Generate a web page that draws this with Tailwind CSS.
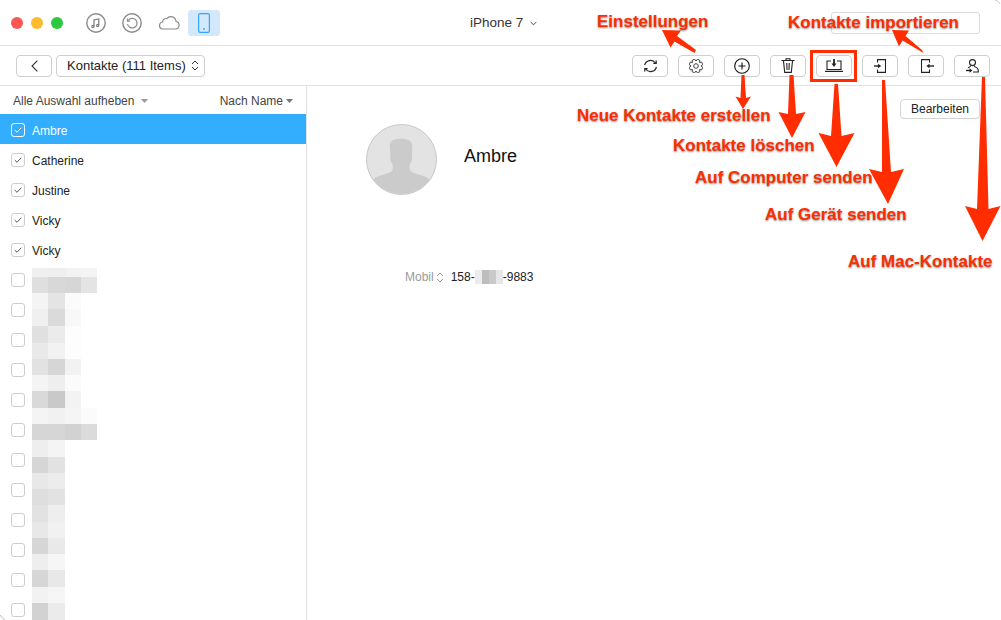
<!DOCTYPE html>
<html lang="en">
<head>
  <meta charset="UTF-8">
  <title>AnyTrans - Kontakte</title>
  <script src="https://cdn.jsdelivr.net/npm/@tailwindcss/browser@4"></script>
</head>
<body class="bg-white w-[1001px] h-[620px] overflow-hidden relative font-['Liberation_Sans',sans-serif] text-[12px] text-[#222]">

  <!-- title bar -->
  <header class="h-[46px] border-b border-[#e2e2e2] flex items-center relative">
    <div class="flex gap-2 ml-[11px]">
      <span class="w-3 h-3 rounded-full bg-[#fc5753]"></span>
      <span class="w-3 h-3 rounded-full bg-[#fdbb2e]"></span>
      <span class="w-3 h-3 rounded-full bg-[#2bc840]"></span>
    </div>
    <div class="flex items-center ml-[23px] text-[#8c8c8c]">
      <svg class="w-5 h-5" viewBox="0 0 20 20" fill="none" stroke="currentColor">
        <circle cx="10" cy="10" r="9.2" stroke-width="1.4"/>
        <path d="M8 13.500V7l4.800-1v6.200" stroke-width="1.200" stroke="#777"/>
        <circle cx="6.900" cy="13.500" r="1.100" stroke-width="1.100" stroke="#777"/><circle cx="11.700" cy="12.500" r="1.100" stroke-width="1.100" stroke="#777"/>
      </svg>
      <svg class="w-5 h-5 ml-4" viewBox="0 0 20 20" fill="none" stroke="currentColor">
        <circle cx="10" cy="10" r="9.2" stroke-width="1.400"/>
        <path d="M6.200 7.500A4.800 4.800 0 1 1 5.500 11" stroke-width="1.200"/>
        <path d="M5.500 5.500v2.600h2.600" stroke-width="1.200"/>
      </svg>
      <svg class="w-[23px] h-[15px] ml-[15px]" viewBox="0 0 23 15" fill="none" stroke="currentColor" stroke-width="1.200">
        <path d="M5 14h13.500a3.800 3.800 0 0 0 .6-7.500A5.200 5.200 0 0 0 9.800 3.600 3.400 3.400 0 0 0 5.600 7 3.600 3.600 0 0 0 5 14z"/>
      </svg>
    </div>
    <div class="w-8 h-[26px] ml-2 rounded-[3px] bg-[#d3e8fb] flex items-center justify-center">
      <svg class="w-3 h-5" viewBox="0 0 12 20" fill="none" stroke="#35a6f5" stroke-width="1.200">
        <rect x=".6" y=".6" width="10.800" height="18.800" rx="1.600"/>
        <circle cx="6" cy="16" r=".9" fill="#35a6f5" stroke="none"/>
      </svg>
    </div>
    <div class="absolute left-[470px] top-[13px] flex items-center gap-[7px] text-[13.500px] text-[#333]">
      iPhone 7
      <svg class="w-[7px] h-[5px]" viewBox="0 0 7 5" fill="none" stroke="#444" stroke-width="1"><path d="M.7 1l2.800 2.800L6.300 1"/></svg>
    </div>
    <div class="absolute left-[831px] top-[12px] w-[149px] h-[22px] border border-[#dcdcdc] rounded-[3px]"></div>
  </header>

  <!-- toolbar -->
  <div class="h-[40px] border-b border-[#e2e2e2] flex items-center pl-4 pr-[11px]">
    <button class="w-9 h-[22px] border border-[#cfcfcf] rounded-[4px] flex items-center justify-center">
      <svg class="w-[7px] h-3" viewBox="0 0 7 12" fill="none" stroke="#333" stroke-width="1.100"><path d="M6.400 .6L1 6l5.400 5.400"/></svg>
    </button>
    <button class="w-[149px] h-[22px] ml-1 border border-[#cfcfcf] rounded-[4px] flex items-center pl-[10px] gap-[5px] text-[13px] text-[#222]">
      Kontakte (111 Items)
      <svg class="w-2 h-[11px]" viewBox="0 0 8 11" fill="none" stroke="#333" stroke-width="1"><path d="M1 4l3-3 3 3M1 7l3 3 3-3"/></svg>
    </button>
    <div class="ml-auto flex gap-[10px]">
      <button class="w-9 h-[22px] border border-[#cfcfcf] rounded-[4px] flex items-center justify-center">
        <svg class="w-[15px] h-[14px]" viewBox="0 0 15 14" fill="none" stroke="#222" stroke-width="1.200">
          <path d="M1.600 6.200A6 6 0 0 1 12.400 4"/><path d="M13.400 7.800A6 6 0 0 1 2.600 10"/>
          <path d="M13.200 1.600V4.400H10.400"/><path d="M1.800 12.400V9.600H4.600"/>
        </svg>
      </button>
      <button class="w-9 h-[22px] border border-[#cfcfcf] rounded-[4px] flex items-center justify-center">
        <svg class="w-[14px] h-[14px]" viewBox="0 0 14 14" fill="none" stroke="#444" stroke-width="1">
          <path id="gear"/>
          <circle cx="7" cy="7" r="2.300"/>
        </svg>
      </button>
      <button class="w-9 h-[22px] border border-[#cfcfcf] rounded-[4px] flex items-center justify-center">
        <svg class="w-4 h-4" viewBox="0 0 16 16" fill="none" stroke="#111" stroke-width="1.100">
          <circle cx="8" cy="8" r="7.300"/><path d="M8 4.500v7M4.500 8h7"/>
        </svg>
      </button>
      <button class="w-9 h-[22px] border border-[#cfcfcf] rounded-[4px] flex items-center justify-center">
        <svg class="w-[14px] h-[15px]" viewBox="0 0 14 15" fill="none" stroke="#222" stroke-width="1.100">
          <path d="M.5 2.500h13M2.500 3l1.200 11.400h6.600L11.500 3M5 2.300V.7h4v1.600M5.800 5l.2 7M8.200 5l-.2 7"/>
        </svg>
      </button>
      <button class="w-9 h-[22px] border border-[#cfcfcf] rounded-[4px] flex items-center justify-center">
        <svg class="w-[18px] h-[13px]" viewBox="0 0 18 13" fill="none" stroke="#222" stroke-width="1.100">
          <path d="M6 2H2v8.500h14V2h-4"/><path d="M0 12.400h18" stroke-width="1.300"/><path d="M9 0v5" stroke-width="1.800"/><path d="M6.500 4.500h5L9 8z" fill="#222" stroke="none"/>
        </svg>
      </button>
      <button class="w-9 h-[22px] border border-[#cfcfcf] rounded-[4px] flex items-center justify-center">
        <svg class="w-[12px] h-[14px]" viewBox="0 0 12 14" fill="none" stroke="#222" stroke-width="1.100">
          <path d="M3.500 3.500V.6h8v12.800h-8v-2.900"/><path d="M0 7h4.500" stroke-width="1.400"/><path d="M4 4.700L7.200 7 4 9.300z" fill="#222" stroke="none"/>
        </svg>
      </button>
      <button class="w-9 h-[22px] border border-[#cfcfcf] rounded-[4px] flex items-center justify-center">
        <svg class="w-[13px] h-[14px] ml-[3px]" viewBox="0 0 13 14" fill="none" stroke="#222" stroke-width="1.100">
          <path d="M8.500 3.500V.6h-8v12.800h8v-2.900"/><path d="M8 7h5" stroke-width="1.400"/><path d="M8.500 4.700L5.300 7l3.200 2.300z" fill="#222" stroke="none"/>
        </svg>
      </button>
      <button class="w-9 h-[22px] border border-[#cfcfcf] rounded-[4px] flex items-center justify-center">
        <svg class="w-[13px] h-[14px]" viewBox="0 0 13 14" fill="none" stroke="#222" stroke-width="1.100">
          <circle cx="6.500" cy="3.600" r="3"/><path d="M4.800 6.500c0 1.200-1.300 1.600-2.800 2.300M8.200 6.500c0 1.300 1.800 1.700 3 2.600.8.600 1.200 2 1.200 3.900H7"/>
          <path d="M0 11.500h4" stroke-width="1.400"/><path d="M3.500 9.300L6.500 11.500 3.500 13.700z" fill="#222" stroke="none"/>
        </svg>
      </button>
    </div>
  </div>

  <main class="flex h-[534px]">
    <!-- contact list -->
    <aside class="w-[307px] border-r border-[#e2e2e2] overflow-hidden shrink-0">
      <div class="h-7 flex items-center justify-between pt-[2px] px-[13px] text-[#444]">
        <span class="flex items-center gap-[7px]">Alle Auswahl aufheben
          <svg class="w-[7px] h-1" viewBox="0 0 7 4" fill="#999"><path d="M0 0h7L3.500 4z"/></svg></span>
        <span class="flex items-center gap-[3px]">Nach Name
          <svg class="w-[7px] h-1" viewBox="0 0 7 4" fill="#777"><path d="M0 0h7L3.500 4z"/></svg></span>
      </div>
      <ul id="contacts"></ul>
    </aside>

    <!-- details -->
    <section class="flex-1 relative">
      <button class="absolute left-[593px] top-[13px] w-[80px] h-[20px] border border-[#d4d4d4] rounded-[4px] text-[12px] text-[#222]">Bearbeiten</button>
      <div class="flex items-center pl-[59px] pt-[38px]">
        <div class="w-[71px] h-[71px] rounded-full bg-[#e3e3e3] border border-[#c8c8c8] overflow-hidden">
          <svg class="w-full h-full" viewBox="0 0 70 70" fill="#cbcbcb">
            <path d="M23 22c0-6 4-8 11.500-8S46 16 46 22l-.5 10c1 .5.500 3-.5 5-.5 1-1 1.500-1.500 3-.5 2-.5 5 1 7 3 3 12 3 19 8 3 3 3 10 3 15H3c0-5 0-12 3-15 7-5 16-5 19-8 1.500-2 1.500-5 1-7-.5-1.500-1-2-1.500-3-1-2-1.500-4.500-.5-5z"/>
          </svg>
        </div>
        <span class="ml-[27px] text-[18px] text-[#111] -mt-[7px]">Ambre</span>
      </div>
      <div class="flex items-center mt-[73px] pl-[98px] text-[12px]">
        <span class="text-[#9a9a9a]">Mobil</span>
        <svg class="w-2 h-[11px] ml-[2px]" viewBox="0 0 8 11" fill="none" stroke="#999" stroke-width="1"><path d="M1 4l3-3 3 3M1 7l3 3 3-3"/></svg>
        <span class="ml-[7px]">158-</span>
        <span class="flex w-[28px] h-[14px]">
          <i class="flex-1 bg-[#ececec]"></i><i class="flex-1 bg-[#bdbdbd]"></i><i class="flex-1 bg-[#c9c9c9]"></i><i class="flex-1 bg-[#e6e6e6]"></i>
        </span>
        <span>-9883</span>
      </div>
    </section>
  </main>

  <!-- blurred names, lies over the list rows -->
  <div id="mosaic" class="absolute left-[32px] top-[268px] w-[65px] flex flex-col"></div>

  <!-- red annotations over the screenshot -->
  <svg class="absolute inset-0 w-[1001px] h-[620px] pointer-events-none" viewBox="0 0 1001 620" fill="#ff2d00">
    <rect x="811.500" y="51.500" width="44" height="29" fill="none" stroke="#ff2d00" stroke-width="3"/>
    <path d="M696 50l-1.500 3-20-11.500-4 6L662 30l19 .5-4 5.500z"/>
    <path d="M922 50l1.500 3-21-12.500-3.500 6L892 30l17 .5-3.500 5.500z"/>
    <path d="M741.500 75h3l1.500 23 5-1.500L743 109l-7.500-12.500 5 1.500z"/>
    <path d="M789.500 75h4l2.500 39 9.500-2L792 138l-13.500-26 9.500 2z"/>
    <path d="M834.500 84h3.500l3.500 52 13-3-18 34-18-34 12.500 3z"/>
    <path d="M882 80h3l6 92 13-3-16 35-19-35 13 3z"/>
    <path d="M982 77h3l3.500 132 12-3-18 35-17.500-35 12 3z"/>
    <!-- window corners -->
    <path d="M995 0q4 1 5 4" fill="none" stroke="#ccc"/>
    <path d="M0 615q2 3 5 5" fill="none" stroke="#bbb"/>
  </svg>
  <span class="note left-[597px] top-[12px]">Einstellungen</span>
  <span class="note left-[788px] top-[13px]">Kontakte importieren</span>
  <span class="note left-[577px] top-[106px]">Neue Kontakte erstellen</span>
  <span class="note left-[673px] top-[136px]">Kontakte löschen</span>
  <span class="note left-[695px] top-[168px]">Auf Computer senden</span>
  <span class="note left-[765px] top-[205px]">Auf Gerät senden</span>
  <span class="note left-[848px] top-[252px]">Auf Mac-Kontakte</span>

  <script>
    // list rows
    const names = ['Ambre', 'Catherine', 'Justine', 'Vicky', 'Vicky'];
    const list = document.getElementById('contacts');
    for (let i = 0; i < 17; i++) {
      const active = i === 0;
      const name = names[i] || '';
      const li = document.createElement('li');
      li.className = active
        ? 'h-[30px] flex items-center pt-[2px] pl-[11px] gap-[7px] bg-[#33aeff] text-white'
        : 'h-[30px] flex items-center pt-[2px] pl-[11px] gap-[7px] text-[#222]';
      const box = active ? 'border-white' : 'border-[#cdcdcd]';
      const tick = name
        ? '<svg class="w-2 h-[6px]" viewBox="0 0 8 6" fill="none" stroke="' + (active ? '#fff' : '#555') + '"><path d="M.7 3l2.300 2.300L7.300 .7"/></svg>'
        : '';
      li.innerHTML = '<span class="w-[14px] h-[14px] rounded-[3px] border ' + box + ' flex items-center justify-center">' + tick + '</span><span class="mt-[2px]">' + name + '</span>';
      list.appendChild(li);
    }

    // gear outline, 8 teeth
    let d = '';
    for (let k = 0; k < 8; k++) {
      const a = k * Math.PI / 4 + Math.PI / 8;
      [[5, -0.38], [6.9, -0.2], [6.9, 0.2], [5, 0.38]].forEach(([r, o]) => {
        d += (d ? 'L' : 'M') + (7 + r * Math.cos(a + o)).toFixed(2) + ' ' + (7 + r * Math.sin(a + o)).toFixed(2);
      });
    }
    document.getElementById('gear').setAttribute('d', d + 'z');

    // mosaic cells, grey values per 16px block
    const cells = [
      [9, 'f0f0f0 eeeeee f2f2f2 f4f4f4'], [16, 'dfdfdf d8d8d8 d6d6d6 e4e4e4'],
      [16, 'f4f4f4 e4e4e4 fbfbfb ffffff'], [17, 'f0f0f0 dadada f8f8f8 ffffff'],
      [17, 'e0e0e0 ebebeb fdfdfd ffffff'], [16, 'e9e9e9 f2f2f2 fdfdfd ffffff'],
      [16, 'e2e2e2 d6d6d6 f2f2f2 ffffff'], [16, 'f4f4f4 eeeeee fbfbfb ffffff'],
      [17, 'd9d9d9 c9c9c9 f3f3f3 ffffff'], [16, 'f4f4f4 f1f1f1 f5f5f5 fbfbfb'],
      [16, 'd6d6d6 d6d6d6 d2d2d2 dbdbdb'], [17, 'eeeeee f4f4f4 ffffff ffffff'],
      [16, 'd6d6d6 e2e2e2 ffffff ffffff'], [16, 'e8e8e8 ececec ffffff ffffff'],
      [16, 'dedede e2e2e2 ffffff ffffff'], [17, 'e2e2e2 eeeeee ffffff ffffff'],
      [16, 'e8e8e8 f1f1f1 ffffff ffffff'], [16, 'd6d6d6 e9e9e9 ffffff ffffff'],
      [16, 'eeeeee f6f6f6 ffffff ffffff'], [17, 'd6d6d6 e8e8e8 ffffff ffffff'],
      [16, 'f2f2f2 f6f6f6 ffffff ffffff'], [17, 'd2d2d2 ebebeb ffffff ffffff']
    ];
    const mosaic = document.getElementById('mosaic');
    cells.forEach(([h, row]) => {
      const r = document.createElement('div');
      r.className = 'flex';
      r.style.height = h + 'px';
      row.split(' ').forEach(c => {
        const cell = document.createElement('div');
        cell.className = 'flex-1';
        cell.style.background = '#' + c;
        r.appendChild(cell);
      });
      mosaic.appendChild(r);
    });

    // all notes share one look
    document.querySelectorAll('.note').forEach(n => {
      n.classList.add('absolute', 'font-bold', 'text-[17px]', 'leading-5', 'whitespace-nowrap', 'text-[#ff2d00]', '[text-shadow:0_1px_2px_rgba(0,0,0,0.45)]');
    });
  </script>
</body>
</html>
